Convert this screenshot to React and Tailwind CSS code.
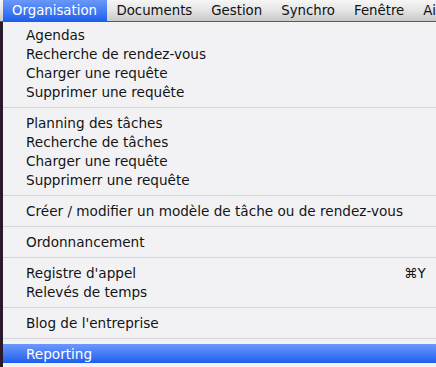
import React from "react";

const Item = ({ children, shortcut }) => (
  <div className="h-[19px] flex items-center pt-[2px] pl-[23px] pr-[12px] text-[13.6px] text-[#141414] whitespace-nowrap">
    <span className="flex-1">{children}</span>
    {shortcut && <span className="w-[20px]">{shortcut}</span>}
  </div>
);

const Sep = () => (
  <div className="h-[12px] flex items-center">
    <div className="h-px w-full bg-[#d6d6d8]" />
  </div>
);

export default function App() {
  const bar = ["Documents", "Gestion", "Synchro", "Fenêtre", "Aide"];
  return (
    <div className="w-[436px] h-[367px] overflow-hidden bg-[#2b1a2d] font-['DejaVu_Sans',sans-serif] flex flex-col">
      <div className="h-[22px] shrink-0 flex items-stretch pl-[3px] bg-gradient-to-b from-[#f6f6f6] via-[#e4e4e4] to-[#c9c9c9] border-b border-[#5a5a5a] text-[13.3px] whitespace-nowrap overflow-hidden">
        <div className="px-[9px] pr-[10px] flex items-center text-white bg-gradient-to-b from-[#6a98f8] to-[#1f5fee]">
          Organisation
        </div>
        {bar.map((b) => (
          <div key={b} className="px-[9.5px] flex items-center text-[#111]">
            {b}
          </div>
        ))}
      </div>
      <div className="flex-1 flex min-h-0">
        <div className="w-[3px] shrink-0 bg-[#2b1a2d]" />
        <div className="flex-1 bg-[#f2f2f4] pt-[3px] flex flex-col">
          <Item>Agendas</Item>
          <Item>Recherche de rendez-vous</Item>
          <Item>Charger une requête</Item>
          <Item>Supprimer une requête</Item>
          <Sep />
          <Item>Planning des tâches</Item>
          <Item>Recherche de tâches</Item>
          <Item>Charger une requête</Item>
          <Item>Supprimerr une requête</Item>
          <Sep />
          <Item>Créer / modifier un modèle de tâche ou de rendez-vous</Item>
          <Sep />
          <Item>Ordonnancement</Item>
          <Sep />
          <Item shortcut="⌘Y">Registre d'appel</Item>
          <Item>Relevés de temps</Item>
          <Sep />
          <Item>Blog de l'entreprise</Item>
          <Sep />
          <div className="h-[19px] flex items-center pt-[2px] pl-[23px] text-[13.6px] text-white whitespace-nowrap bg-gradient-to-b from-[#6c98f9] to-[#1d5cf0]">
            Reporting
          </div>
        </div>
      </div>
    </div>
  );
}
